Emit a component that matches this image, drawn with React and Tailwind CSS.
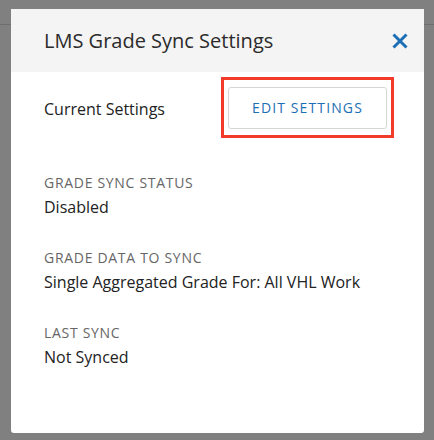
import React from "react";

function Field({ label, value }) {
  return (
    <div className="flex flex-col">
      <div className="h-5 leading-5 text-[14px] tracking-[0.05em] text-[#666666] uppercase">{label}</div>
      <div className="mt-[2px] h-6 leading-6 text-[16px] text-[#222222]">{value}</div>
    </div>
  );
}

export default function App() {
  return (
    <div
      className="relative w-[434px] h-[440px] bg-[#808080] overflow-hidden"
      style={{ fontFamily: "'Open Sans', sans-serif" }}
    >
      <div className="h-[25px] border-b border-[#6e6e6e]" />
      <div className="absolute left-[11px] top-[9px] w-[413px] h-[424px] bg-white rounded-b-[3px] flex flex-col">
        <div className="h-[63px] bg-[#f4f4f4] flex items-center justify-between pl-[33px] pr-[16px]">
          <h1 className="text-[20px] text-[#2b2b2b] leading-none">LMS Grade Sync Settings</h1>
          <button className="w-[16px] h-[16px] flex items-center justify-center" aria-label="Close">
            <svg width="16" height="16" viewBox="0 0 16 16">
              <path d="M1.5 1.5 L14.5 14.5 M14.5 1.5 L1.5 14.5" stroke="#1d6fb5" strokeWidth="3" fill="none" />
            </svg>
          </button>
        </div>
        <div className="pl-[33px] pr-[30px] pt-[5px] flex flex-col">
          <div className="flex items-center justify-between">
            <span className="text-[16px] text-[#222222] pt-[2px]">Current Settings</span>
            <div className="w-[173px] h-[61px] border-[3px] border-[#f23b28] flex items-center justify-center">
              <button className="w-[159px] h-[42px] border border-[#d6d6d6] rounded-[3px] bg-white text-[14px] tracking-[0.08em] text-[#1d6fb5] flex items-center justify-center">
                EDIT SETTINGS
              </button>
            </div>
          </div>
          <div className="mt-[35px] flex flex-col gap-[29px]">
            <Field label="Grade Sync Status" value="Disabled" />
            <Field label="Grade Data to Sync" value="Single Aggregated Grade For: All VHL Work" />
            <Field label="Last Sync" value="Not Synced" />
          </div>
        </div>
      </div>
    </div>
  );
}
